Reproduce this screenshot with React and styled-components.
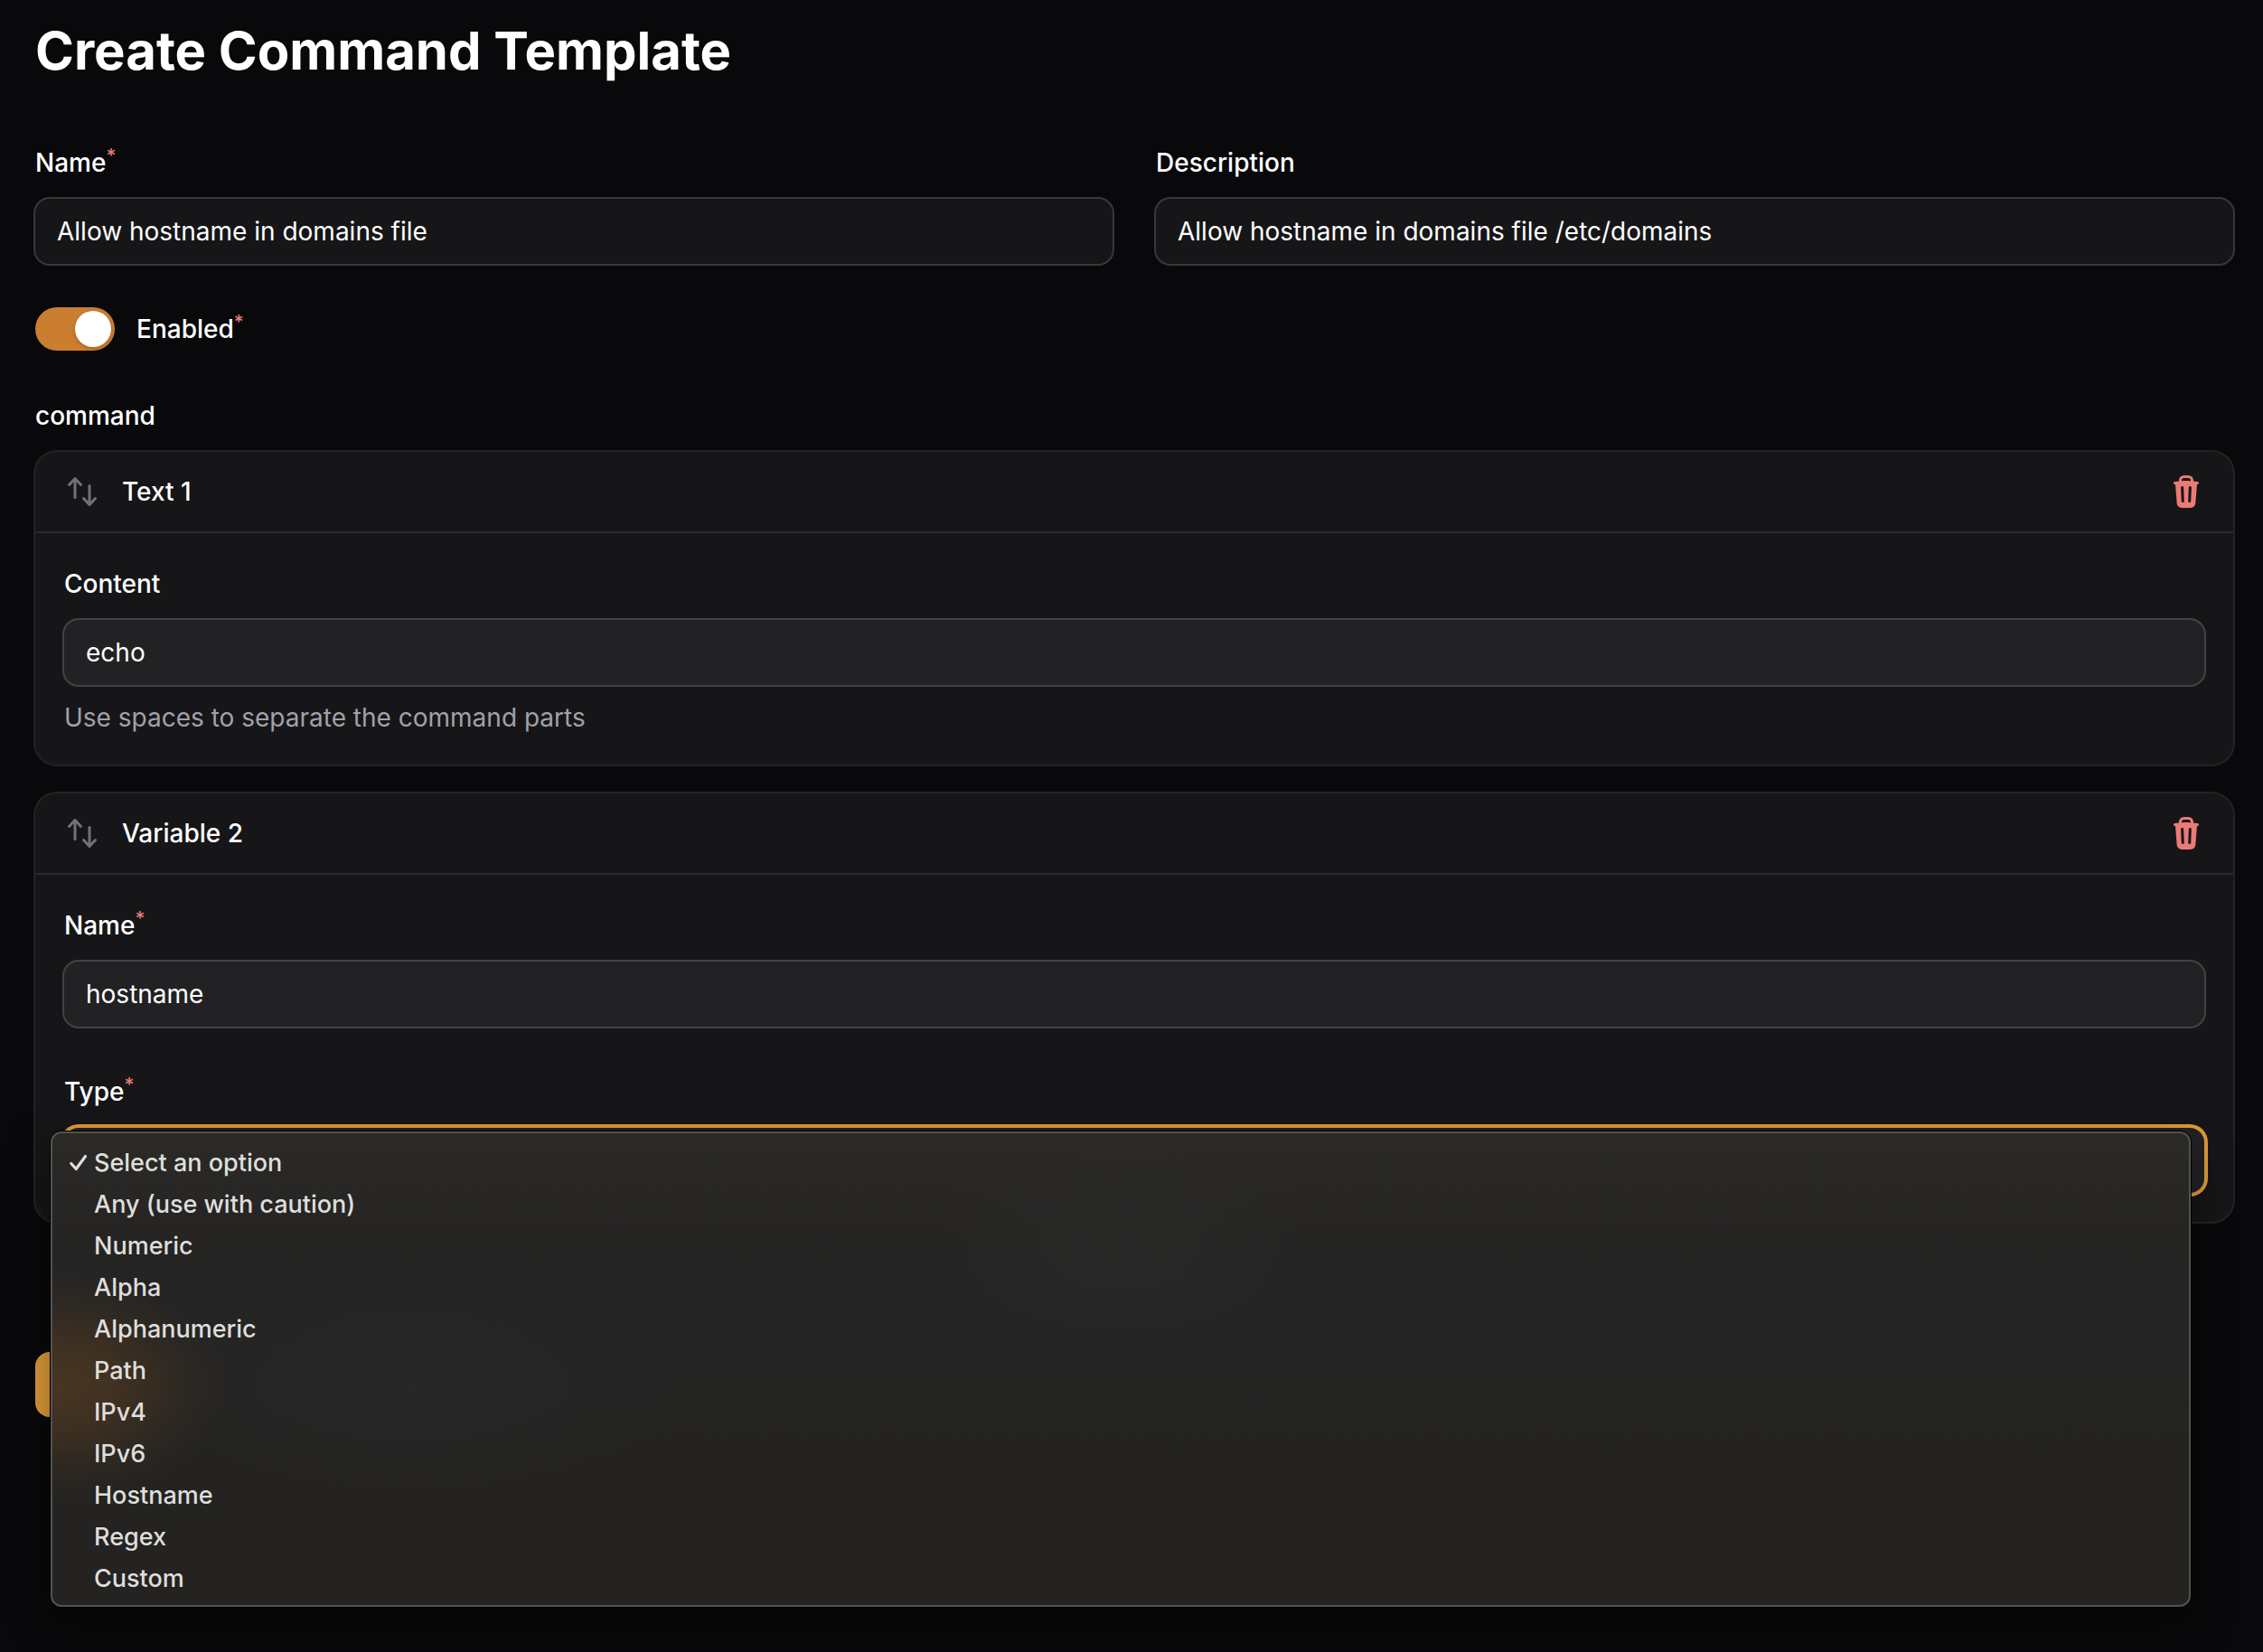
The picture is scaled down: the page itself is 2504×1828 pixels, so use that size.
import React, { useState } from 'react'
import styled, { createGlobalStyle } from 'styled-components'
import { HiMiniArrowsUpDown, HiMiniTrash } from 'react-icons/hi2'

const types = [
    'Select an option',
    'Any (use with caution)',
    'Numeric',
    'Alpha',
    'Alphanumeric',
    'Path',
    'IPv4',
    'IPv6',
    'Hostname',
    'Regex',
    'Custom'
]

function Field({ id, label, required, hint, nested, value, onChange }) {
    return (
        <FieldPath>
            <Label htmlFor={id}>{label}{required && <sup>*</sup>}</Label>
            <Input id={id} type='text' $nested={nested} value={value} onChange={(e) => onChange(e.target.value)} />
            {hint && <Hint>{hint}</Hint>}
        </FieldPath>
    )
}

function Block({ title, children }) {
    return (
        <Card>
            <CardHeader>
                <IconButton type='button' aria-label='Move'><HiMiniArrowsUpDown /></IconButton>
                <CardTitle>{title}</CardTitle>
                <IconButton type='button' aria-label='Delete' $danger><HiMiniTrash /></IconButton>
            </CardHeader>
            <CardBody>{children}</CardBody>
        </Card>
    )
}

function TypeSelect() {
    const [type, setType] = useState(types[0])

    return (
        <FieldPath>
            <Label htmlFor='type'>Type<sup>*</sup></Label>
            <SelectPath>
                <Select id='type' value={type} onChange={(e) => setType(e.target.value)}>
                    {types.map((item) => <option value={item} key={item}>{item}</option>)}
                </Select>
                <Menu role='listbox' aria-label='Type'>
                    {
                        types.map((item) => {
                            return (
                                <MenuItem role='option' aria-selected={item === type} key={item} onClick={() => setType(item)}>
                                    <CheckSlot>
                                        {item === type && (
                                            <svg width='22' height='22' viewBox='0 0 22 22' fill='none'>
                                                <path d='M2.8 11.5 8.2 17.5 18.5 3.5' stroke='currentColor' strokeWidth='3.2' strokeLinecap='round' strokeLinejoin='round' />
                                            </svg>
                                        )}
                                    </CheckSlot>
                                    {item}
                                </MenuItem>
                            )
                        })
                    }
                </Menu>
            </SelectPath>
        </FieldPath>
    )
}

function App() {
    const [name, setName] = useState('Allow hostname in domains file')
    const [description, setDescription] = useState('Allow hostname in domains file /etc/domains')
    const [enabled, setEnabled] = useState(true)
    const [content, setContent] = useState('echo')
    const [variable, setVariable] = useState('hostname')

    return (
        <>
            <GlobalStyle />
            <Page>
                <Title>Create Command Template</Title>
                <Form onSubmit={(e) => e.preventDefault()}>
                    <Row>
                        <Field id='name' label='Name' required value={name} onChange={setName} />
                        <Field id='description' label='Description' value={description} onChange={setDescription} />
                    </Row>
                    <ToggleRow>
                        <Toggle id='enabled' type='checkbox' role='switch' checked={enabled} onChange={(e) => setEnabled(e.target.checked)} />
                        <Label htmlFor='enabled'>Enabled<sup>*</sup></Label>
                    </ToggleRow>
                    <FieldPath role='group' aria-labelledby='command'>
                        <Label as='span' id='command'>command</Label>
                        <BlockList>
                            <Block title='Text 1'>
                                <Field id='content' label='Content' nested hint='Use spaces to separate the command parts' value={content} onChange={setContent} />
                            </Block>
                            <Block title='Variable 2'>
                                <Field id='variable' label='Name' required nested value={variable} onChange={setVariable} />
                                <TypeSelect />
                            </Block>
                        </BlockList>
                    </FieldPath>
                    <Actions>
                        <SubmitButton type='submit' aria-label='Create' />
                    </Actions>
                </Form>
            </Page>
        </>
    )
}

export default App

const GlobalStyle = createGlobalStyle`
    *{
        box-sizing: border-box;
    }

    body{
        margin: 0;
        background: #09090b;
        color: #fff;
        font-family: Inter, sans-serif;
        font-size: 28px;
        line-height: 48px;
    }

    input, select, button{
        font: inherit;
        color: inherit;
    }
`

const Page = styled.main`
    min-height: 100vh;
    padding: 20px 33px 20px 39px;
`

const Title = styled.h1`
    margin: 0;
    font-size: 58px;
    line-height: 72px;
    font-weight: 700;
`

const Form = styled.form`
    display: flex;
    flex-direction: column;
    gap: 48px;
    margin-top: 64px;
`

const Row = styled.div`
    display: grid;
    grid-template-columns: 1fr 1fr;
    gap: 48px;
`

const FieldPath = styled.div`
    display: flex;
    flex-direction: column;
    gap: 16px;
    min-width: 0;
`

const Label = styled.label`
    font-weight: 500;

    sup{
        position: relative;
        top: -10px;
        font-size: 21px;
        line-height: 0;
        vertical-align: baseline;
        color: #ea7a75;
    }
`

const Input = styled.input`
    width: 100%;
    height: 72px;
    padding: 0 24px;
    border: 0;
    border-radius: 16px;
    outline: none;
    background: ${({ $nested }) => ($nested ? '#222224' : '#161618')};
    box-shadow: 0 0 0 2px ${({ $nested }) => ($nested ? '#434345' : '#38383a')};
`

const Hint = styled.p`
    margin: 0;
    line-height: 40px;
    color: #a1a1aa;
`

const ToggleRow = styled.div`
    display: flex;
    align-items: center;
    gap: 24px;
`

const Toggle = styled.input`
    appearance: none;
    width: 88px;
    height: 48px;
    margin: 0;
    padding: 4px;
    border-radius: 24px;
    background: ${({ checked }) => (checked ? '#cb7e2f' : '#3f3f46')};
    cursor: pointer;

    &::before{
        content: '';
        display: block;
        width: 40px;
        height: 40px;
        margin-left: ${({ checked }) => (checked ? '40px' : '0')};
        border-radius: 50%;
        background: #fff;
        box-shadow: 0 2px 4px rgba(0, 0, 0, 0.2);
    }
`

const BlockList = styled.div`
    display: flex;
    flex-direction: column;
    gap: 32px;
`

const Card = styled.section`
    border-radius: 24px;
    background: #161618;
    box-shadow: 0 0 0 2px #232325;
`

const CardHeader = styled.header`
    display: flex;
    align-items: center;
    gap: 24px;
    height: 88px;
    padding: 0 32px;
`

const CardTitle = styled.h2`
    flex: 1;
    margin: 0;
    font-size: 28px;
    font-weight: 500;
`

const IconButton = styled.button`
    display: flex;
    padding: 0;
    border: 0;
    background: none;
    color: ${({ $danger }) => ($danger ? '#ea7a75' : '#71717a')};
    cursor: pointer;

    svg{
        width: 40px;
        height: 40px;
    }
`

const CardBody = styled.div`
    display: flex;
    flex-direction: column;
    gap: 48px;
    padding: 32px;
    border-top: 2px solid #2c2c2e;
`

const SelectPath = styled.div`
    position: relative;
`

const Select = styled.select`
    appearance: none;
    display: block;
    width: 100%;
    height: 72px;
    padding: 0 24px;
    border: 0;
    border-radius: 16px;
    outline: none;
    background: #222224;
    box-shadow: 0 0 0 4px #df9b38;
`

const Menu = styled.ul`
    position: absolute;
    z-index: 1;
    top: 4px;
    left: -15px;
    right: 15px;
    margin: 0;
    padding: 10px 18px 6px;
    border: 2px solid #52524f;
    border-radius: 12px;
    list-style: none;
    background:
        radial-gradient(190px 130px at 10px 280px, #483521 0%, rgba(72, 53, 33, 0.75) 35%, rgba(72, 53, 33, 0.25) 70%, rgba(72, 53, 33, 0) 100%),
        radial-gradient(300px 120px at 400px 280px, rgba(40, 40, 40, 0.8), rgba(40, 40, 40, 0)),
        radial-gradient(220px 120px at 50% 130px, rgba(44, 44, 43, 0.6), rgba(44, 44, 43, 0)),
        linear-gradient(#2c2a27 0, #252423 120px, #242424 200px, #242321 360px);
    background-origin: border-box;
    box-shadow: 0 0 0 1px #000, 0 16px 48px rgba(0, 0, 0, 0.4);
`

const MenuItem = styled.li`
    display: flex;
    align-items: center;
    gap: 6px;
    height: 46px;
    font-size: 27px;
    font-weight: 500;
    color: #dfdedc;
    cursor: default;
`

const CheckSlot = styled.span`
    display: flex;
    width: 22px;
`

const Actions = styled.div`
    display: flex;
    padding-top: 96px;
`

const SubmitButton = styled.button`
    width: 140px;
    height: 72px;
    border: 0;
    border-radius: 16px;
    background: #df9b38;
    cursor: pointer;
`
